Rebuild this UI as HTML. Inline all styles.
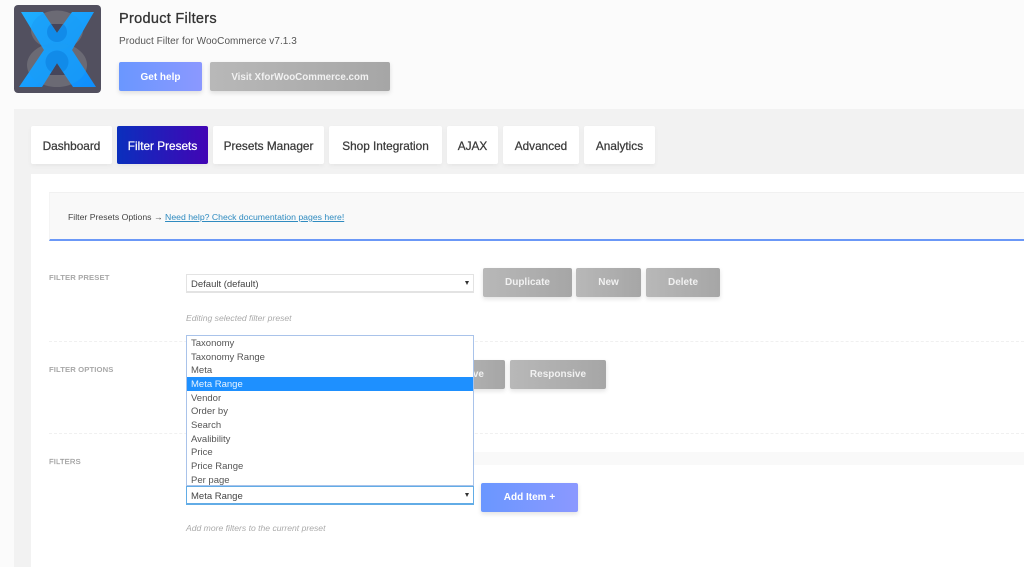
<!DOCTYPE html>
<html><head><meta charset="utf-8"><style>
html,body{margin:0;padding:0}
body{width:1024px;height:567px;overflow:hidden;position:relative;background:#fbfbfb;font-family:"Liberation Sans","DejaVu Sans",sans-serif;color:#333}
div,a,span.a{position:absolute;white-space:nowrap;box-sizing:border-box}
.tab{top:126px;height:38px;background:#fff;border-radius:2px;box-shadow:0 2px 5px rgba(0,0,0,.05);font-size:11.8px;line-height:41px;text-align:center;color:#3a3a3a;-webkit-text-stroke:.25px #3a3a3a}
.btn{border-radius:2px;text-align:center;color:#fff;font-size:10px;font-weight:700;box-shadow:0 2px 5px rgba(0,0,0,.12)}
.g{background:linear-gradient(90deg,#b8b8b8,#a6a6a6);color:#f1f1f1}
.b{background:linear-gradient(90deg,#6a97ff,#8b98ff)}
.lab{left:49px;font-size:7.7px;font-weight:700;color:#a8a8a8;letter-spacing:.1px}
.sel{left:186px;width:288px;height:19px;background:#fff;font-size:9.5px;line-height:19px;padding-left:4px;color:#444}
.arr{position:absolute;right:4px;top:6px;width:0;height:0;border-left:2.5px solid transparent;border-right:2.5px solid transparent;border-top:4px solid #333}
.hint{left:186px;font-size:8.6px;font-style:italic;color:#aaa}
.dash{left:49px;width:975px;border-top:1px dashed #f0f0f0;height:0}
.opt{left:0;width:286px;height:13.7px;font-size:9.5px;line-height:15px;padding-left:4px;color:#555}
</style></head><body>

<svg style="position:absolute;left:14px;top:5px" width="88" height="89" viewBox="14 5 88 89">
<defs>
<clipPath id="x"><path d="M21 12H43L57 33L72 12H94L72 50L96 87H73L57 63L42 87H19L44 50Z"/></clipPath>
<linearGradient id="bl" x1="0" y1="0" x2="1" y2="1"><stop offset="0" stop-color="#1fb0ff"/><stop offset="1" stop-color="#0f8dfb"/></linearGradient>
</defs>
<rect x="14" y="5" width="87" height="88" rx="4" fill="#52505f"/>
<ellipse cx="57" cy="30" rx="26" ry="19.5" fill="#6b6a74"/>
<ellipse cx="57" cy="65" rx="30" ry="22" fill="#6b6a74"/>
<path d="M51 24H63L57 33Z" fill="#45455a"/>
<path d="M57 63L49 75H65Z" fill="#45455a"/>
<path d="M21 12H43L57 33L72 12H94L72 50L96 87H73L57 63L42 87H19L44 50Z" fill="url(#bl)"/>
<g clip-path="url(#x)">
<ellipse cx="57" cy="30" rx="26" ry="19.5" fill="#1b9cf5" opacity=".6"/>
<ellipse cx="57" cy="65" rx="30" ry="22" fill="#1b9cf5" opacity=".6"/>
<circle cx="57" cy="32" r="10" fill="#118be9"/>
<circle cx="57" cy="62" r="11.5" fill="#118be9"/>
</g>
</svg>

<div style="left:119px;top:10px;font-size:14.5px;line-height:18px;color:#333;-webkit-text-stroke:.3px #333;letter-spacing:.3px">Product Filters</div>
<div style="left:119px;top:35px;font-size:10px;line-height:13px;color:#555;letter-spacing:.05px">Product Filter for WooCommerce v7.1.3</div>
<div class="btn b" style="left:119px;top:62px;width:83px;height:29px;line-height:31px">Get help</div>
<div class="btn g" style="left:210px;top:62px;width:180px;height:29px;line-height:31px;font-size:9.8px">Visit XforWooCommerce.com</div>

<div style="left:14px;top:109px;width:1010px;height:458px;background:#f2f2f2"></div>
<div style="left:31px;top:174px;width:993px;height:393px;background:#fff"></div>

<div class="tab" style="left:31px;width:81px">Dashboard</div>
<div class="tab" style="left:117px;width:91px;background:linear-gradient(90deg,#0a2fbd,#4205b5);color:#fff;-webkit-text-stroke:.25px #fff">Filter Presets</div>
<div class="tab" style="left:213px;width:111px">Presets Manager</div>
<div class="tab" style="left:329px;width:113px">Shop Integration</div>
<div class="tab" style="left:447px;width:51px">AJAX</div>
<div class="tab" style="left:503px;width:76px">Advanced</div>
<div class="tab" style="left:584px;width:71px">Analytics</div>

<div style="left:49px;top:192px;width:975px;height:49px;background:#f9f9f9;border-top:1px solid #f1f1f1;border-left:1px solid #f4f4f4;border-bottom:2px solid #6b98f7"></div>
<div style="left:68px;top:211px;font-size:8.7px;line-height:13px;color:#444">Filter Presets Options → <span style="color:#2f8bc0;text-decoration:underline">Need help? Check documentation pages here!</span></div>

<div class="lab" style="top:273px">FILTER PRESET</div>
<div class="sel" style="top:274px;border:1px solid #e3e3e3;border-width:1px 1px 2px 1px;">Default (default)<span class="arr"></span></div>
<div class="btn g" style="left:483px;top:268px;width:89px;height:29px;line-height:30px">Duplicate</div>
<div class="btn g" style="left:576px;top:268px;width:65px;height:29px;line-height:30px">New</div>
<div class="btn g" style="left:646px;top:268px;width:74px;height:29px;line-height:30px">Delete</div>
<div class="hint" style="top:313px">Editing selected filter preset</div>

<div class="dash" style="top:341px"></div>
<div class="lab" style="top:365px">FILTER OPTIONS</div>
<div class="btn g" style="left:440px;top:360px;width:65px;height:29px;line-height:30px;text-align:right;padding-right:21px">ve</div>
<div class="btn g" style="left:510px;top:360px;width:96px;height:29px;line-height:30px">Responsive</div>

<div class="dash" style="top:433px"></div>
<div class="lab" style="top:457px;font-weight:400;color:#999;-webkit-text-stroke:.15px #999">FILTERS</div>
<div style="left:474px;top:452px;width:550px;height:13px;background:#f9f9f9"></div>

<div class="btn b" style="left:481px;top:483px;width:97px;height:29px;line-height:30px">Add Item +</div>
<div class="hint" style="top:523px">Add more filters to the current preset</div>

<div style="left:186px;top:335px;width:288px;height:151px;background:#fff;border:1px solid #a9c3ea;z-index:5">
<div class="opt" style="top:0">Taxonomy</div>
<div class="opt" style="top:13.7px">Taxonomy Range</div>
<div class="opt" style="top:27.3px">Meta</div>
<div class="opt" style="top:41px;background:#1e90ff;color:#e8f4ff">Meta Range</div>
<div class="opt" style="top:54.7px">Vendor</div>
<div class="opt" style="top:68.3px">Order by</div>
<div class="opt" style="top:82px">Search</div>
<div class="opt" style="top:95.7px">Avalibility</div>
<div class="opt" style="top:109.3px">Price</div>
<div class="opt" style="top:123px">Price Range</div>
<div class="opt" style="top:136.7px">Per page</div>
</div>
<div class="sel" style="top:486px;border:1px solid #62ace6;border-bottom-width:2px;z-index:6">Meta Range<span class="arr"></span></div>

</body></html>
